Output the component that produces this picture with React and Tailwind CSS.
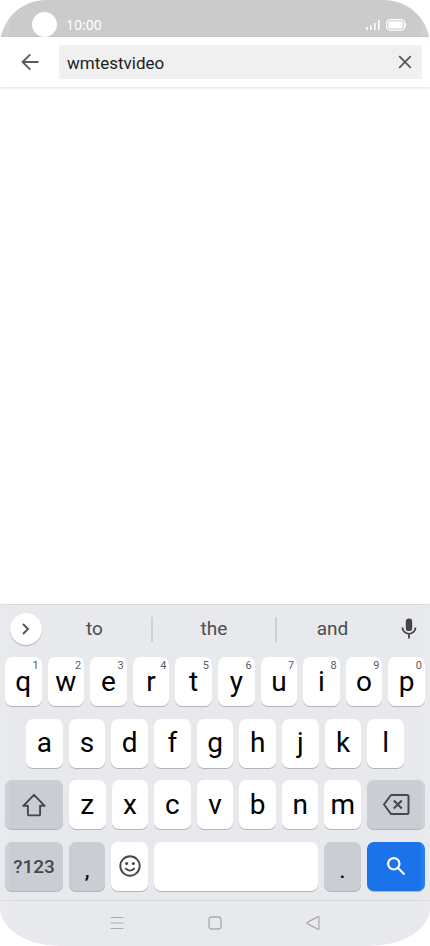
import React, { useState } from "react";

const KEY =
  "relative flex h-[49px] items-center justify-center rounded-[7px] shadow-[0_1px_0_#b3b4b8]";
const LIGHT = "bg-white text-black";
const DARK = "bg-[#cbcdd5] text-[#45474a]";

function LetterKey({ letter, hint }) {
  return (
    <button type="button" className={`${KEY} ${LIGHT} min-w-0 flex-1 text-[28px] leading-8`}>
      {letter}
      {hint && (
        <span className="absolute top-[3px] right-[3px] text-[11px] leading-3 text-[#5a5c5f]">
          {hint}
        </span>
      )}
    </button>
  );
}

function StatusBar() {
  return (
    <div className="flex h-[37px] items-center bg-[#cbcbcb] pt-[12px] pr-[24px] pl-[32px] text-white">
      <span className="size-[25px] rounded-full bg-white" />
      <span className="ml-[9px] flex-1 font-['Noto_Sans',sans-serif] text-[14px] leading-5">10:00</span>
      <svg className="mr-[6px]" width="14" height="12" viewBox="0 0 14 12" fill="white">
        <rect x="0" y="8" width="1.6" height="3" />
        <rect x="4" y="6.500" width="1.6" height="4.500" />
        <rect x="8" y="4" width="1.6" height="7" />
        <rect x="12" y="1" width="1.6" height="10" />
      </svg>
      <svg width="20" height="12" viewBox="0 0 20 12" fill="none" stroke="white">
        <rect x="0.6" y="0.6" width="18" height="10.6" rx="3.6" strokeWidth="1.200" />
        <rect x="2.2" y="2.2" width="14.800" height="7.400" rx="2" fill="white" stroke="none" />
        <path d="M19.400 4v3.6" />
      </svg>
    </div>
  );
}

function SearchHeader() {
  const [query, setQuery] = useState("wmtestvideo");
  return (
    <header className="relative flex h-[50px] items-center bg-white pr-[8px] shadow-[0_1px_3px_rgba(0,0,0,0.13)]">
      <button type="button" aria-label="Back" className="flex h-full w-[59px] items-center justify-center">
        <svg width="18" height="18" viewBox="0 0 18 18" fill="none" stroke="#5b5b5d" strokeWidth="1.9">
          <path d="M17.5 9H2M9.3 1.3L1.6 9l7.7 7.7" />
        </svg>
      </button>
      <div className="flex h-[34px] min-w-0 flex-1 items-center rounded-[2px] bg-[#f0f0f0] pl-[8px]">
        <input
          type="text"
          aria-label="Search"
          value={query}
          onChange={(e) => setQuery(e.target.value)}
          className="min-w-0 flex-1 bg-transparent pt-[2px] text-[17px] leading-6 text-[#212121] outline-none"
        />
        <button
          type="button"
          aria-label="Clear"
          onClick={() => setQuery("")}
          className="flex h-full w-[34px] items-center justify-center"
        >
          <svg width="14" height="14" viewBox="0 0 14 14" fill="none" stroke="#58585c" strokeWidth="1.8">
            <path d="M1.2 1.2l11.6 11.6M12.8 1.2L1.2 12.8" />
          </svg>
        </button>
      </div>
    </header>
  );
}

function Suggestions() {
  return (
    <div className="grid h-[53px] grid-cols-[42px_109fr_126fr_111fr_42px] items-center border-t border-[#d9dadd] pb-[4px] text-[19px] leading-6 text-[#4b4d50]">
      <button
        type="button"
        aria-label="More"
        className="ml-[10px] flex size-[32px] items-center justify-center rounded-full bg-white shadow-[0_1px_1px_rgba(0,0,0,0.25)]"
      >
        <svg width="8" height="12" viewBox="0 0 8 12" fill="none" stroke="#55575a" strokeWidth="2">
          <path d="M1 1l5 5-5 5" />
        </svg>
      </button>
      <button type="button" className="h-[25px] pr-[4px]">to</button>
      <button type="button" className="h-[25px] border-x-2 border-[#cfd0d4]">the</button>
      <button type="button" className="h-[25px]">and</button>
      <button type="button" aria-label="Voice input" className="flex justify-center">
        <svg width="16" height="22" viewBox="0 0 16 22" fill="none">
          <rect x="4.8" y="0.500" width="6.4" height="12.6" rx="3.2" fill="#424447" />
          <path d="M1.5 9.5a6.5 6.3 0 0 0 13 0M8 15.800V20.500" stroke="#424447" strokeWidth="1.8" />
        </svg>
      </button>
    </div>
  );
}

function Keyboard() {
  return (
    <section aria-label="Keyboard" className="bg-[#e8e9ed]">
      <Suggestions />
      <div className="flex h-[234px] flex-col justify-between px-[5px]">
        <div className="flex gap-[6px]">
          {[..."qwertyuiop"].map((c, i) => (
            <LetterKey key={c} letter={c} hint={String((i + 1) % 10)} />
          ))}
        </div>
        <div className="flex gap-[6px] px-[21px]">
          {[..."asdfghjkl"].map((c) => (
            <LetterKey key={c} letter={c} />
          ))}
        </div>
        <div className="flex gap-[6px]">
          <button type="button" aria-label="Shift" className={`${KEY} ${DARK} w-[58px]`}>
            <svg width="24" height="24" viewBox="0 0 24 24" fill="none" stroke="currentColor" strokeWidth="1.9" strokeLinejoin="round">
              <path d="M12 1.800L1.300 12.800h4.600v8.600q0 1 1 1h10.200q1 0 1-1v-8.600h4.600z" />
            </svg>
          </button>
          {[..."zxcvbnm"].map((c) => (
            <LetterKey key={c} letter={c} />
          ))}
          <button type="button" aria-label="Backspace" className={`${KEY} ${DARK} w-[58px]`}>
            <svg width="27" height="21" viewBox="0 0 27 21" fill="none" stroke="currentColor" strokeWidth="2" strokeLinejoin="round">
              <path d="M8 1h16q1.5 0 1.5 1.5v16q0 1.500-1.500 1.500H8L1 10.500z" />
              <path d="M10.800 6.500l8 8M18.800 6.500l-8 8" />
            </svg>
          </button>
        </div>
        <div className="flex gap-[6px]">
          <button type="button" className={`${KEY} ${DARK} w-[58px] pt-[2px] text-[19px] leading-6 font-medium`}>
            ?123
          </button>
          <button type="button" className={`${KEY} bg-[#cbcdd5] w-[36px] pt-[8px] text-[24px] leading-7 text-black`}>
            ,
          </button>
          <button type="button" aria-label="Emoji" className={`${KEY} bg-white w-[37px] text-[#45474a]`}>
            <svg width="22" height="22" viewBox="0 0 22 22" fill="none" stroke="currentColor" strokeWidth="1.9">
              <circle cx="11" cy="11" r="9.7" />
              <path d="M6.300 13.200q4.700 4.800 9.400 0" />
              <circle cx="7.600" cy="8.500" r="1.500" fill="currentColor" stroke="none" />
              <circle cx="14.400" cy="8.500" r="1.500" fill="currentColor" stroke="none" />
            </svg>
          </button>
          <button type="button" aria-label="Space" className={`${KEY} ${LIGHT} flex-1`} />
          <button type="button" className={`${KEY} bg-[#cbcdd5] w-[37px] pt-[8px] text-[24px] leading-7 text-black`}>
            .
          </button>
          <button type="button" aria-label="Search" className={`${KEY} bg-[#1a73e8] w-[58px] text-white`}>
            <svg width="20" height="20" viewBox="0 0 20 20" fill="none" stroke="currentColor" strokeWidth="2.200">
              <circle cx="7.800" cy="7.800" r="5.700" />
              <path d="M11.800 11.800l6.700 6.700" />
            </svg>
          </button>
        </div>
      </div>
      <nav className="mt-[9px] flex h-[46px] items-center justify-center gap-[84px] border-t border-[#d9dadd] pb-[2px] text-[#a9abae]">
        <button type="button" aria-label="Recent apps">
          <svg width="14" height="14" viewBox="0 0 14 14" fill="none" stroke="currentColor" strokeWidth="1.200">
            <path d="M.5 1.500h13M.5 7h13M.5 12.500h13" />
          </svg>
        </button>
        <button type="button" aria-label="Home">
          <svg width="14" height="14" viewBox="0 0 14 14" fill="none" stroke="currentColor" strokeWidth="1.300">
            <rect x="1" y="1" width="12" height="12" rx="2.500" />
          </svg>
        </button>
        <button type="button" aria-label="Back">
          <svg width="14" height="14" viewBox="0 0 14 14" fill="none" stroke="currentColor" strokeWidth="1.200" strokeLinejoin="round">
            <path d="M12.200 .6L1.300 6.400q-.8.600 0 1.200l10.900 5.800q.8.200.8-.8V1.400q0-1-.8-.8z" />
          </svg>
        </button>
      </nav>
    </section>
  );
}

export default function App() {
  return (
    <div className="relative flex min-h-screen flex-col overflow-hidden rounded-[46px_46px_60px_60px/46px_46px_38px_38px] bg-white font-[Roboto,sans-serif]">
      <StatusBar />
      <SearchHeader />
      <main className="flex-1" />
      <Keyboard />
      <div className="pointer-events-none absolute inset-0 border-x-[9px] border-white/8" />
    </div>
  );
}
